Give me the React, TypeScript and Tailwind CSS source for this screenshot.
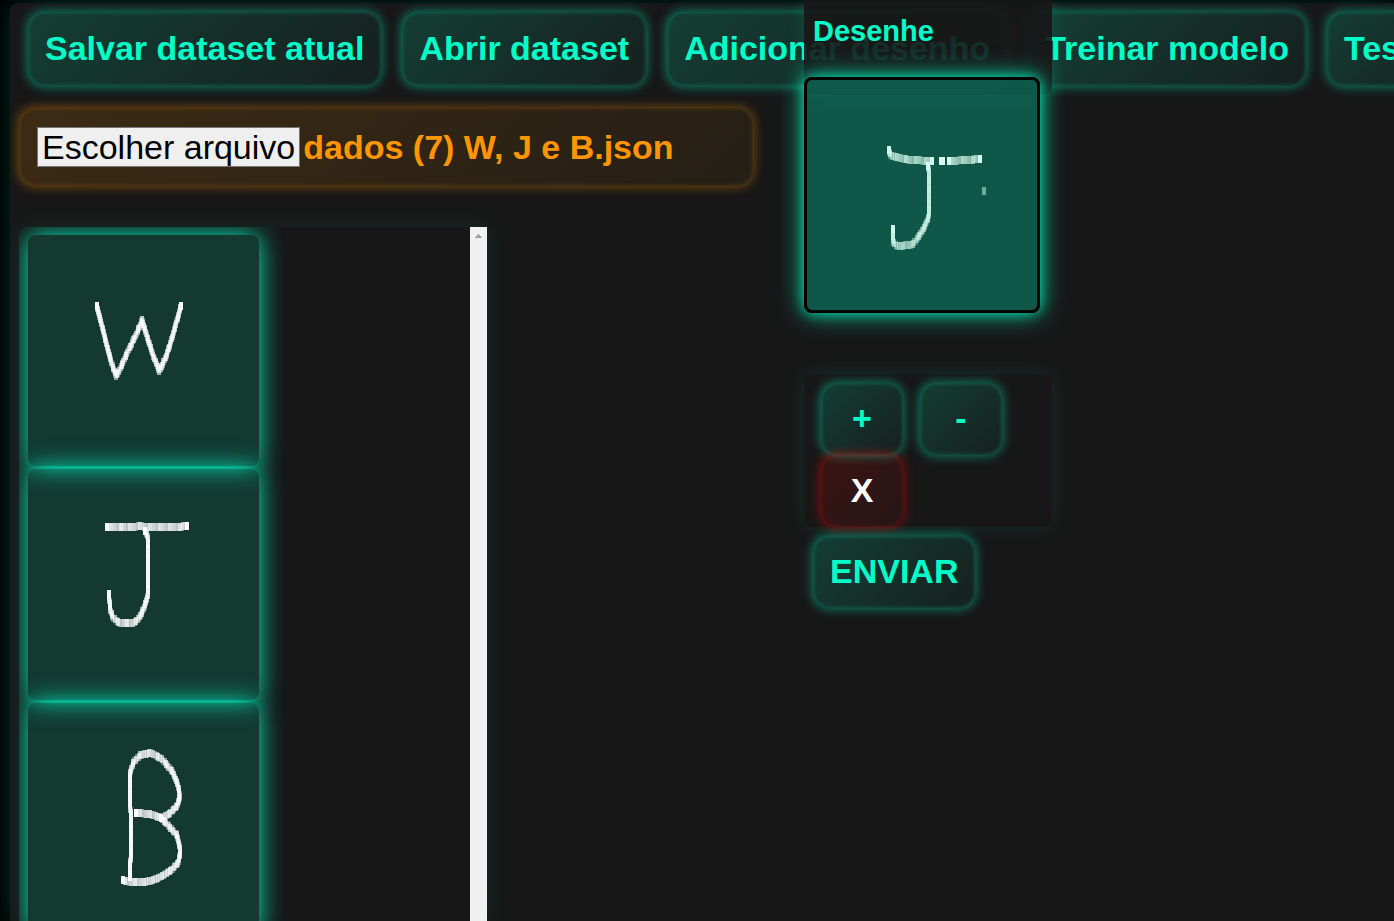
import { useRef } from "react";
import type { ReactNode } from "react";

type Point = [number, number];
type Stroke = Point[];

const letterW: Stroke[] = [
  [[69, 71], [74, 92], [79, 112], [84, 129], [88, 141], [92, 134], [100, 116], [108, 100], [114, 85], [118, 98], [124, 117], [131, 136], [138, 122], [144, 103], [149, 85], [153, 71]],
];

const letterJ: Stroke[] = [
  [[79, 58], [106, 58], [112, 57], [118, 58], [150, 58], [159, 57]],
  [[117, 62], [120, 68], [120, 126], [116, 139], [111, 149], [105, 154], [92, 154], [85, 149], [82, 141], [81, 125]],
];

const letterB: Stroke[] = [
  [[102, 174], [102, 160], [103, 152], [103, 114], [102, 102], [102, 70], [106, 58], [112, 52], [123, 50], [134, 56], [144, 68], [150, 82], [152, 94], [149, 103], [141, 111], [133, 115], [122, 111], [108, 110]],
  [[133, 115], [141, 123], [149, 132], [152, 146], [151, 158], [145, 166], [134, 173], [123, 178], [112, 179], [103, 179], [95, 177]],
];

const currentDrawing: Stroke[] = [
  [[82, 70], [83, 75], [92, 78], [103, 80], [125, 81]],
  [[134, 81], [136, 81]],
  [[142, 81], [158, 80], [173, 79]],
  [[121, 86], [122, 92], [122, 136], [117, 148], [110, 159], [104, 165], [90, 166], [86, 162], [86, 149]],
];

function stamps(stroke: Stroke): Point[] {
  const out: Point[] = [];
  for (let i = 0; i < stroke.length - 1; i++) {
    const [x1, y1] = stroke[i];
    const [x2, y2] = stroke[i + 1];
    const steps = Math.max(1, Math.round(Math.hypot(x2 - x1, y2 - y1) / 2));
    for (let s = 0; s < steps; s++) {
      out.push([
        Math.round(x1 + ((x2 - x1) * s) / steps),
        Math.round(y1 + ((y2 - y1) * s) / steps),
      ]);
    }
  }
  out.push(stroke[stroke.length - 1]);
  return out;
}

function Brush({ strokes, color = "#ffffff", flow = 0.38 }: { strokes: Stroke[]; color?: string; flow?: number }) {
  return (
    <g fill={color}>
      {strokes.map((stroke, i) =>
        stamps(stroke).map(([x, y], j, all) => (
          <rect
            key={`${i}-${j}`}
            x={x - 2}
            y={y - 4}
            width={4}
            height={8}
            opacity={j === 0 || j === all.length - 1 ? 1 : flow + ((j * 7) % 5) * 0.08}
          />
        )),
      )}
    </g>
  );
}

function NeonButton({ children, className = "" }: { children: ReactNode; className?: string }) {
  return (
    <button
      type="button"
      className={`shrink-0 whitespace-nowrap rounded-2xl bg-linear-135 from-[#00ffc82b] to-[#00ffc80a] pb-[3px] text-center text-[34px] leading-10 font-bold text-[#00ffc8] shadow-[0_0_11px_1px_#00ffc870,inset_0_0_4px_#00ffc84d] ${className}`}
    >
      {children}
    </button>
  );
}

function Sample({ name, strokes }: { name: string; strokes: Stroke[] }) {
  return (
    <li className="size-[231px] shrink-0 rounded-lg bg-[#00ffc826] shadow-[0_0_26px_#00ffc8f2]">
      <svg viewBox="0 0 231 231" className="size-full" role="img" aria-label={name}>
        <Brush strokes={strokes} />
      </svg>
    </li>
  );
}

function DrawingPanel() {
  return (
    <aside className="absolute top-0 left-[804px] z-10 flex w-[248px] flex-col">
      <h2 className="h-[95px] rounded-b-lg bg-[#171717e6] px-[9px] pt-[11px] text-[29px] leading-10 font-bold text-[#00ffc8] shadow-[0_0_20px_#00ffc826]">
        Desenhe
      </h2>
      <div className="relative -mt-[18px] size-[236px] rounded-lg border-[3px] border-black bg-[#0d7460b3] shadow-[0_0_12px_#00ffc899,0_0_26px_#00ffc8cc]">
        <svg viewBox="0 0 230 230" className="size-full" role="img" aria-label="Desenho">
          <Brush strokes={currentDrawing} color="#d5fbee" flow={0.28} />
          <rect x={175} y={107} width={4} height={8} fill="#d5fbee" opacity={0.5} />
        </svg>
      </div>
      <div className="mt-[61px] flex flex-wrap gap-x-[17px] rounded-lg px-[17px] pt-[9px] shadow-[0_0_20px_#00ffc81c]">
        <NeonButton className="h-[72px] w-[82px]">+</NeonButton>
        <NeonButton className="h-[72px] w-[82px]">-</NeonButton>
        <button
          type="button"
          className="h-[72px] w-[82px] rounded-2xl bg-linear-135 from-[#ff000029] to-[#ff00000f] pb-[3px] text-[34px] leading-10 font-bold text-white shadow-[0_0_11px_1px_#ff000080,inset_0_0_4px_#ff00004d]"
        >
          X
        </button>
      </div>
      <NeonButton className="mt-[9px] ml-[9px] h-[72px] self-start px-[17px]">ENVIAR</NeonButton>
    </aside>
  );
}

function FilePicker() {
  const input = useRef<HTMLInputElement>(null);
  return (
    <div className="mt-[22px] ml-[9px] flex h-[78px] w-[734px] items-center gap-[3px] rounded-2xl bg-linear-135 from-[#ff950029] to-[#ff95000f] px-[18px] text-[34px] leading-[38px] shadow-[0_0_11px_1px_#ff950066,inset_0_0_4px_#ff950040]">
      <input ref={input} type="file" accept=".json" hidden aria-label="Escolher arquivo" />
      <button
        type="button"
        onClick={() => input.current?.click()}
        className="shrink-0 border border-[#767676] bg-[#efefef] px-[4px] text-black"
      >
        Escolher arquivo
      </button>
      <span className="font-bold whitespace-nowrap text-[#ff9500]">dados (7) W, J e B.json</span>
    </div>
  );
}

export default function App() {
  return (
    <div className="relative h-screen overflow-hidden bg-black pt-[3px] pl-[10px] font-['Liberation_Sans',Arial,sans-serif]">
      <main className="flex h-full flex-col rounded-tl-lg bg-[#171717] shadow-[0_0_24px_#00ffc82e]">
        <nav className="flex gap-[21px] pt-[9px] pl-[18px]">
          <NeonButton className="h-[74px] px-[17px]">Salvar dataset atual</NeonButton>
          <NeonButton className="h-[74px] px-[17px]">Abrir dataset</NeonButton>
          <NeonButton className="h-[74px] px-[17px]">Adicionar desenho</NeonButton>
          <NeonButton className="h-[74px] px-[17px]">Treinar modelo</NeonButton>
          <NeonButton className="h-[74px] px-[17px]">Testar</NeonButton>
        </nav>
        <FilePicker />
        <section className="mt-[41px] ml-[9px] flex min-h-0 w-[468px] flex-1 rounded-tl-lg shadow-[0_0_24px_#00ffc81a]">
          <ul className="flex min-h-0 flex-1 flex-col gap-[3px] overflow-hidden rounded-tl-lg bg-[#171717] px-[9px] pt-2">
            <Sample name="W" strokes={letterW} />
            <Sample name="J" strokes={letterJ} />
            <Sample name="B" strokes={letterB} />
          </ul>
          <div className="flex w-[17px] justify-center bg-[#f0f0f0] pt-[7px]" aria-hidden="true">
            <svg width="7" height="4" viewBox="0 0 7 4" fill="#a0a0a0">
              <path d="M3 0h1v1h1v1h1v1h1v1H0V3h1V2h1V1h1z" />
            </svg>
          </div>
        </section>
      </main>
      <DrawingPanel />
    </div>
  );
}
